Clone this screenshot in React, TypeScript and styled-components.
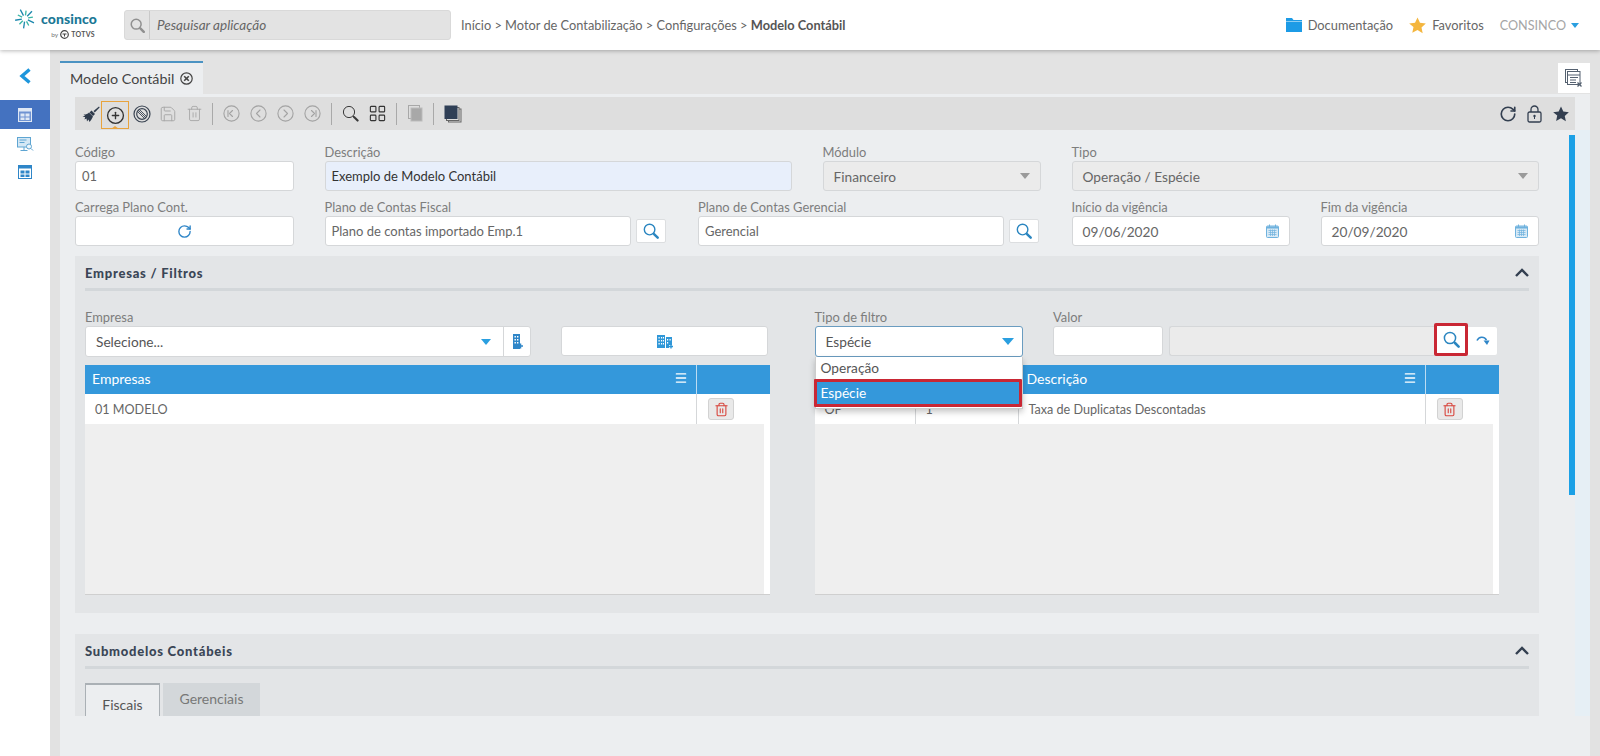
import React from 'react';
import styled, { createGlobalStyle } from 'styled-components';
import { CirclePlus, LayoutGrid, Menu as MenuIcon, Trash2, Save, RotateCw } from 'lucide-react';

const Global = createGlobalStyle`
  html, body { margin: 0; padding: 0; height: 756px; overflow: hidden; background: #fff; }
  * { box-sizing: border-box; }
  body { font-family: Lato, "Liberation Sans", sans-serif; color: #555; }
`;

const Page = styled.div`width: 1600px; height: 756px; display: flex; flex-direction: column; overflow: hidden;`;
const Header = styled.header`
  height: 50px; flex: none; background: #fff; display: flex; align-items: center; padding-left: 15px;
  box-shadow: 0 1px 4px rgba(0,0,0,.28); position: relative; z-index: 5;
`;
const Logo = styled.div`width: 109px; flex: none; display: flex; flex-direction: column; margin-top: -3px;`;
const LogoTop = styled.div`display: flex; align-items: center; gap: 6px;`;
const LogoName = styled.span`font-size: 14px; font-weight: 900; color: #1b7896; letter-spacing: .1px; line-height: 20px; width: 56px;`;
const LogoSub = styled.div`display: flex; align-items: center; justify-content: flex-end; gap: 2px; width: 80px; margin-top: 1px; font-size: 6.5px; color: #777; line-height: 9px;`;
const LogoTotvs = styled.b`font-size: 7px; letter-spacing: .3px; color: #555;`;
const SearchBox = styled.div`
  width: 327px; height: 30px; flex: none; display: flex; align-items: center; background: #e3e3e3;
  border: 1px solid #d9d9d9; border-radius: 3px;
`;
const SearchIconCell = styled.div`width: 25px; height: 28px; display: flex; align-items: center; justify-content: center; border-right: 1px solid #c9c9c9; color: #909090;`;
const SearchText = styled.span`font-style: italic; font-size: 13.5px; color: #666; padding-left: 7px;`;
const Crumbs = styled.div`margin-left: 10px; font-size: 12.8px; color: #666; white-space: nowrap; flex: 1;`;
const CrumbLast = styled.b`color: #555;`;
const HeaderLinks = styled.div`display: flex; align-items: center; padding-right: 21px;`;
const HeaderLink = styled.span`display: flex; align-items: center; gap: 6px; font-size: 12.8px; letter-spacing: .03px; color: #666; margin-right: 16px;`;
const UserName = styled.span`font-size: 12.6px; color: #a5a5a5; margin-right: 5px;`;
const Caret = styled.span<{ $c?: string; $w?: number }>`
  display: inline-block; width: 0; height: 0;
  border-left: ${p => p.$w ?? 4}px solid transparent; border-right: ${p => p.$w ?? 4}px solid transparent;
  border-top: ${p => (p.$w ?? 4) + 1}px solid ${p => p.$c ?? '#2a9fe0'};
`;

const Body = styled.div`flex: 1; display: flex; min-height: 0;`;
const Sidebar = styled.aside`width: 50px; flex: none; background: #fff; display: flex; flex-direction: column; align-items: stretch;`;
const BackCell = styled.div`height: 50px; padding-top: 2px; display: flex; align-items: center; justify-content: center;`;
const SideActive = styled.div`height: 29px; display: flex; align-items: center; justify-content: center; background: #4472c0;`;
const SideList = styled.div`padding-top: 2px; display: flex; flex-direction: column;`;
const SideItem = styled.div`height: 27px; display: flex; align-items: center; justify-content: center;`;
const Gutter = styled.div`width: 10px; flex: none; background: #e2e2e2;`;
const Main = styled.main`flex: none; width: 1530px; display: flex; flex-direction: column; background: #eceef0; min-height: 0;`;
const TabStrip = styled.div`height: 44px; flex: none; background: #e3e3e3; display: flex; align-items: flex-end; justify-content: space-between;`;
const Tab = styled.div`
  width: 143px; height: 33px; background: #eceef0; border-top: 2px solid #4b93c3; display: flex; align-items: center;
  padding-left: 10px; gap: 6px; font-size: 14.3px; color: #444; white-space: nowrap;
`;
const CloseTabs = styled.div`width: 32px; height: 30px; background: #fff; margin-bottom: 1px; display: flex; align-items: center; justify-content: center;`;
const ToolbarWrap = styled.div`padding: 3px 15px 0; flex: none;`;
const Toolbar = styled.div`height: 33px; background: #dedede; display: flex; align-items: center; padding-left: 5px;`;
const ToolBtn = styled.div<{ $w?: number; $off?: boolean }>`
  width: ${p => p.$w ?? 27}px; height: 28px; display: flex; align-items: center; justify-content: center; flex: none;
  color: ${p => (p.$off ? '#a8a8a8' : '#333f50')};
`;
const ToolActive = styled(ToolBtn)`
  border: 1px solid #e8a33d; position: relative; width: 28px; margin-top: 3px; height: 28px; color: #333;
  &::after { content: ''; position: absolute; left: 50%; bottom: -1px; margin-left: -4px; border: 4px solid transparent; border-top: 0; border-bottom: 3px solid #e8a33d; }
`;
const ToolSep = styled.div`width: 1px; height: 22px; background: #a9a9a9; margin: 0 5px; flex: none;`;
const ToolSpacer = styled.div`flex: 1;`;

const Scroller = styled.div`height: 586px; flex: none; display: flex; overflow: hidden; padding-left: 15px;`;
const Form = styled.div`width: 1464px; flex: none; display: flex; flex-direction: column; padding-top: 13px;`;
const Track = styled.div`margin-left: 30px; width: 21px; padding-top: 5px; display: flex; background: linear-gradient(90deg, transparent 6px, #e6eff5 6px);`;
const Thumb = styled.div`width: 6px; height: 360px; background: #1aa0e6;`;

const Row = styled.div<{ $last?: boolean }>`display: flex; margin-bottom: ${p => (p.$last ? 0 : 7)}px;`;
const Field = styled.div<{ $w: number; $ml?: number }>`width: ${p => p.$w}px; margin-left: ${p => p.$ml ?? 0}px; flex: none;`;
const Label = styled.div`height: 18px; line-height: 18px; font-size: 12.9px; color: #7d7d7d; white-space: nowrap;`;
const Input = styled.div<{ $bg?: string; $dark?: boolean; $select?: boolean; $grow?: boolean }>`
  height: 30px; background: ${p => p.$bg ?? '#fff'}; border: 1px solid #d5d7d9; border-radius: 3px;
  padding: 0 ${p => (p.$select ? 10 : 6)}px 0 ${p => (p.$select ? 10 : 6)}px; display: flex; align-items: center; justify-content: space-between;
  font-size: ${p => (p.$select ? 13.7 : 13)}px; color: ${p => (p.$dark ? '#333' : '#666')}; white-space: nowrap;
  ${p => (p.$grow ? 'flex: 1;' : '')}
`;
const CenterInput = styled(Input)`justify-content: center;`;
const InputGroup = styled.div`display: flex; align-items: center; gap: 5px;`;
const LupaBtn = styled.div`width: 30px; height: 24px; flex: none; background: #fff; border: 1px solid #dcdee0; border-radius: 2px; display: flex; align-items: center; justify-content: center;`;

const Panel = styled.section<{ $h: number; $mt: number }>`height: ${p => p.$h}px; margin-top: ${p => p.$mt}px; background: #e3e5e7; padding: 0 10px; flex: none; overflow: hidden;`;
const PanelHead = styled.div`height: 35px; display: flex; align-items: center; justify-content: space-between; border-bottom: 3px solid #d3d7da; padding-top: 1px;`;
const PanelTitle = styled.h3`margin: 0; font-size: 13px; font-weight: 900; letter-spacing: .75px; color: #3a4656;`;
const Columns = styled.div`display: flex; gap: 45px; padding-top: 17px;`;
const Column = styled.div`width: 684.5px; flex: none;`;
const Controls = styled.div`display: flex; height: 57px;`;
const SelectWrap = styled.div<{ $w: number }>`width: ${p => p.$w}px; flex: none; position: relative;`;
const SelectBox = styled.div<{ $focus?: boolean }>`
  height: 31px; background: #fff; border: 1px solid ${p => (p.$focus ? '#6a9cc0' : '#d5d7d9')}; border-radius: 3px; display: flex; align-items: center; padding-left: 10px;
  padding-right: ${p => (p.$focus ? 8 : 0)}px; font-size: 13.7px; color: #555; justify-content: space-between;
`;
const SelectAddon = styled.div`display: flex; align-items: center; height: 100%;`;
const AddonCell = styled.div`width: 27px; height: 100%; border-left: 1px solid #d5d7d9; margin-left: 12px; display: flex; align-items: center; justify-content: center;`;
const WideBtn = styled.div`width: 207px; height: 30px; margin: 18px 0 0 30px; background: #fff; border: 1px solid #d5d7d9; border-radius: 3px; display: flex; align-items: center; justify-content: center;`;
const Dropdown = styled.div`
  position: absolute; top: 49px; left: 0; width: 100%; height: 52px; background: #fff; border: 1px solid #ccc; border-top: 0; z-index: 3;
  box-shadow: 0 3px 6px rgba(0,0,0,.22); font-size: 13.7px; color: #555;
`;
const DropItem = styled.div`height: 22px; line-height: 22px; padding-left: 5px;`;
const DropSel = styled.div`
  height: 28px; line-height: 22px; margin: 0 0 0 -2px; background: #3498db; color: #fff; border: 3px solid #c92734; padding-left: 4px; border-radius: 1px;
`;
const ValorGroup = styled.div`margin-left: 30.5px; display: flex; flex-direction: column;`;
const ValorRow = styled.div`display: flex; align-items: flex-start;`;
const ValueInput = styled.div`width: 110px; height: 30px; background: #fff; border: 1px solid #d5d7d9; border-radius: 3px;`;
const DisabledInput = styled.div`width: 265.5px; height: 30px; margin-left: 5.5px; background: #ebebeb; border: 1px solid #d5d7d9; border-right: 0; border-radius: 3px 0 0 3px;`;
const RedSearch = styled.div`width: 34px; height: 33px; margin-top: -3px; background: #fff; border: 3px solid #c92734; border-radius: 2px; display: flex; align-items: center; justify-content: center;`;
const ArrowBtn = styled.div`width: 30px; height: 30px; background: #fff; border: 1px solid #e2e4e6; border-left: 0; border-radius: 0 3px 3px 0; display: flex; align-items: center; justify-content: center;`;

const Table = styled.div`height: 230px; background: #fff; border-bottom: 1px solid #cfcfcf; display: flex; flex-direction: column; font-size: 12.6px;`;
const TableHead = styled.div<{ $cols: string }>`height: 29px; flex: none; display: grid; grid-template-columns: ${p => p.$cols}; background: #3498db; color: #fff; font-size: 14px;`;
const HeadCell = styled.div<{ $line?: boolean; $pl?: number }>`display: flex; align-items: center; justify-content: space-between; padding: 0 8px 3px ${p => p.$pl ?? 7}px; border-right: ${p => (p.$line ? '1px solid #bcdcf2' : '0')};`;
const TableRow = styled.div<{ $cols: string }>`height: 30px; flex: none; display: grid; grid-template-columns: ${p => p.$cols}; color: #666;`;
const Cell = styled.div<{ $line?: boolean }>`display: flex; align-items: center; padding-left: 10px; white-space: nowrap; border-right: ${p => (p.$line ? '1px solid #d5d7d9' : '0')};`;
const ActionCell = styled.div`display: flex; align-items: center; padding-left: 11px;`;
const DelBtn = styled.div`width: 26px; height: 22px; background: #e9e9e9; border: 1px solid #d2d2d2; border-radius: 3px; display: flex; align-items: center; justify-content: center; color: #d8473f;`;
const EmptyBody = styled.div`flex: 1; margin-right: 6px; background: #efefef;`;

const Tabs = styled.div`display: flex; gap: 3px; padding-top: 14px;`;
const InnerTab = styled.div<{ $on?: boolean }>`
  height: ${p => (p.$on ? 40 : 33)}px; width: ${p => (p.$on ? 75 : 97)}px; display: flex; justify-content: center; font-size: 14px; flex: none;
  padding-top: ${p => (p.$on ? 11 : 7)}px; color: ${p => (p.$on ? '#555' : '#777')};
  background: ${p => (p.$on ? '#eceef0' : '#d3d7da')}; border: ${p => (p.$on ? '1px solid #aab0b5' : '0')}; border-top-width: ${p => (p.$on ? 2 : 0)}px;
`;

const StarShape = ({ size, c }: { size: number; c: string }) => (
  <svg width={size} height={size} viewBox="0 0 20 20" fill={c}><path d="M10 .6l2.900 6.300 6.900.8-5.100 4.700 1.400 6.800L10 15.200l-6.100 3.400 1.400-6.800L.2 7.700l6.900-.8z" /></svg>
);
const Glass = ({ size = 17, c = '#2b86c0', w = 1.5 }: { size?: number; c?: string; w?: number }) => (
  <svg width={size} height={size} viewBox="0 0 17 17" fill="none" stroke={c}>
    <circle cx="7" cy="7" r="5.600" strokeWidth={w} />
    <path d="M11 11l1 1" strokeWidth={w} />
    <path d="M12 12l3.600 3.600" strokeWidth={w + 1.1} strokeLinecap="round" />
  </svg>
);
const CircleNav = ({ d }: { d: string }) => (
  <svg width="17" height="17" viewBox="0 0 17 17" fill="none" stroke="#a3a3a3" strokeWidth="1.100">
    <circle cx="8.500" cy="8.500" r="7.600" /><path d={d} strokeLinecap="round" strokeLinejoin="round" />
  </svg>
);
const Broom = () => (
  <svg width="18" height="18" viewBox="0 0 18 18" fill="#2f3b4c">
    <path d="M17 1.500 L11.500 6 L12.700 7.400 L17.600 2.400z" />
    <path d="M9.500 5.500 L13 9 L11 11 L7.500 7.500z" />
    <path d="M7 7.500 L11 11.500 C10 13.500 9 15.500 7.500 17 L6.500 14.500 L5 16.500 L4.500 13.500 L2.500 14.500 L3.200 12 L.5 12 L3 10.500 L1.500 9.500 C3.500 9.700 5.500 9 7 7.500z" />
  </svg>
);
const BanIcon = () => (
  <svg width="18" height="18" viewBox="0 0 18 18" fill="none" stroke="#3a4452">
    <circle cx="9" cy="9" r="8" strokeWidth="1.200" />
    <circle cx="9" cy="9" r="5.300" strokeWidth="1.200" />
    <path d="M5.200 5.200l7.600 7.600M4.300 6.300l7.500 7.500M6.300 4.300l7.500 7.500" strokeWidth=".9" />
  </svg>
);
const LockIcon = () => (
  <svg width="15" height="18" viewBox="0 0 15 18" fill="none" stroke="#333f50" strokeWidth="1.300">
    <rect x="1" y="7" width="13" height="10" rx="1.500" />
    <path d="M4 7V4.500a3.500 3.500 0 0 1 7 0V7" />
    <circle cx="7.500" cy="11" r="1.200" fill="#333f50" stroke="none" />
    <path d="M7.500 11v3" strokeWidth="1" />
  </svg>
);
const Calendar = () => (
  <svg width="13" height="14" viewBox="0 0 13 14">
    <rect x=".5" y="2" width="12" height="11.500" rx="1" fill="#d7e9f5" stroke="#6fb2de" />
    <rect x="1" y="2.500" width="11" height="2" fill="#6fb2de" />
    <path d="M3.500 .5v3M9.500 .5v3" stroke="#6fb2de" />
    <path d="M2.500 6.500h8M2.500 8.500h8M2.500 10.500h8M4.500 5.500v6.500M6.500 5.500v6.500M8.500 5.500v6.500" stroke="#6fb2de" strokeWidth=".7" />
  </svg>
);
const BuildingPlus = () => (
  <svg width="18" height="15" viewBox="0 0 18 15" fill="#2f97d8">
    <path d="M1 1h8v13H1zM10 3h6v8H13v3H10z" />
    <path d="M2.500 3h1.200v1.500H2.500zM5 3h1.200v1.500H5zM7 3h1v1.500H7zM2.500 6h1.200v1.500H2.500zM5 6h1.200v1.500H5zM7 6h1v1.500H7zM2.500 9h1.200v1.500H2.500zM5 9h1.200v1.500H5zM7 9h1v1.500H7zM11 5h1.200v1.500H11zM13.500 5h1.200v1.500h-1.200zM11 8h1.200v1.500H11z" fill="#fff" />
    <path d="M15 10.500v4M13 12.500h4" stroke="#2f97d8" strokeWidth="1.400" />
  </svg>
);
const TowerPlus = () => (
  <svg width="11" height="17" viewBox="0 0 11 17" fill="#2f86c8">
    <path d="M1 1h7v15H1z" />
    <path d="M2.500 3h1.400v1.500H2.500zM5 3h1.400v1.500H5zM2.500 6h1.400v1.500H2.500zM5 6h1.400v1.500H5zM2.500 9h1.400v1.500H2.500zM5 9h1.400v1.500H5z" fill="#fff" />
    <path d="M8.500 10.500v5M6 13h5" stroke="#2f86c8" strokeWidth="1.500" />
  </svg>
);
const TableIcon = ({ c, fill }: { c: string; fill: string }) => (
  <svg width="14" height="14" viewBox="0 0 14 14">
    <rect x=".5" y=".5" width="13" height="13" fill={fill} stroke={c} />
    <rect x=".5" y=".5" width="13" height="3" fill={c} />
    <path d="M2.500 5.500h4v3h-4zM7.500 5.500h4v3h-4zM2.500 9.500h4v2.500h-4zM7.500 9.500h4v2.500h-4z" fill={c} />
  </svg>
);
const MonitorSearch = () => (
  <svg width="17" height="16" viewBox="0 0 17 16" fill="none" stroke="#5ea5d2">
    <rect x=".5" y=".5" width="13" height="9.500" fill="#d4e8f5" />
    <path d="M2.500 3h7M2.500 5.500h5M7 10v3M3.500 13.500h7" />
    <circle cx="12" cy="9.500" r="2.500" fill="#eef6fb" /><path d="M14 11.500l2 2" />
  </svg>
);
const StackIcon = () => (
  <svg width="18" height="18" viewBox="0 0 18 18">
    <rect x="4.500" y="4" width="12.500" height="13" fill="none" stroke="#666" />
    <rect x="2.500" y="2.500" width="12.500" height="13" fill="#dedede" stroke="#666" />
    <rect x=".5" y=".5" width="13" height="13.500" fill="#2f3f56" />
  </svg>
);
const CopyIcon = () => (
  <svg width="15" height="17" viewBox="0 0 15 17" fill="none" stroke="#a8a8a8">
    <rect x=".5" y=".5" width="11" height="13" /><rect x="3" y="3" width="11" height="13" fill="#a8a8a8" stroke="#bbb" />
  </svg>
);
const ReportX = () => (
  <svg width="18" height="18" viewBox="0 0 18 18" fill="none" stroke="#556170">
    <rect x=".5" y=".5" width="12" height="13" /><rect x="2.500" y="2.500" width="12.500" height="13" fill="#fff" />
    <path d="M2.500 6h12.500M5 8.500h8M5 11h6M5 13.500h6" />
    <path d="M12.500 13.500l4 4M16.500 13.500l-4 4" strokeWidth="1.300" />
  </svg>
);
const Folder = () => (
  <svg width="16" height="14" viewBox="0 0 16 14" fill="#1c9be6"><path d="M0 0h6l1.500 2H16v1.400H0z" /><path d="M0 4h16v10H0z" /></svg>
);
const BurstLogo = () => {
  const rays = Array.from({ length: 10 }, (_, i) => i * 36 + 8);
  return (
    <svg width="20" height="21" viewBox="-10 -10.500 20 21">
      {rays.map((a, i) => (
        <line key={a} x1="0" y1="-3.200" x2="0" y2={i % 2 ? '-10' : '-8'} stroke={i % 2 ? '#1c87ad' : '#39b6a5'} strokeWidth="1.300" transform={`rotate(${a})`} />
      ))}
    </svg>
  );
};
const TotvsMark = () => (
  <svg width="9" height="9" viewBox="0 0 9 9" fill="none" stroke="#444"><circle cx="4.500" cy="4.500" r="3.800" strokeWidth="1.200" /><path d="M2.500 4h4M4.500 4v2.500" /></svg>
);
const CurveArrow = () => (
  <svg width="16" height="14" viewBox="0 0 16 14" fill="none">
    <path d="M2 6.500C4 2.500 9 2 11.500 6" stroke="#2f86c8" strokeWidth="1.600" />
    <path d="M8.500 6.500h6L12 11z" fill="#2f86c8" />
  </svg>
);
const BackChevron = () => (
  <svg width="14" height="16" viewBox="0 0 14 16" fill="none" stroke="#1e96dc" strokeWidth="3.400"><path d="M11.500 1.500L4 8l7.500 6.500" /></svg>
);
const Collapse = () => (
  <svg width="14" height="9" viewBox="0 0 14 9" fill="none" stroke="#333f50" strokeWidth="2.400"><path d="M1 8l6-6 6 6" /></svg>
);
const Trash = () => <Trash2 size={15} strokeWidth={1.8} />;

const leftCols = '612px 1fr';
const rightCols = '101px 103px 407px 1fr';

export default function App() {
  return (
    <Page>
      <Global />
      <Header>
        <Logo>
          <LogoTop><BurstLogo /><LogoName>consinco</LogoName></LogoTop>
          <LogoSub>by <TotvsMark /> <LogoTotvs>TOTVS</LogoTotvs></LogoSub>
        </Logo>
        <SearchBox>
          <SearchIconCell><Glass size={15} c="#909090" w={1.7} /></SearchIconCell>
          <SearchText>Pesquisar aplicação</SearchText>
        </SearchBox>
        <Crumbs>Início &gt; Motor de Contabilização &gt; Configurações &gt; <CrumbLast>Modelo Contábil</CrumbLast></Crumbs>
        <HeaderLinks>
          <HeaderLink><Folder />Documentação</HeaderLink>
          <HeaderLink><StarShape size={17} c="#f4b63f" />Favoritos</HeaderLink>
          <UserName>CONSINCO</UserName>
          <Caret />
        </HeaderLinks>
      </Header>
      <Body>
        <Sidebar>
          <BackCell><BackChevron /></BackCell>
          <SideActive><TableIcon c="#dfe8f5" fill="#6f93d2" /></SideActive>
          <SideList>
            <SideItem><MonitorSearch /></SideItem>
            <SideItem><TableIcon c="#2f86c8" fill="#fff" /></SideItem>
          </SideList>
        </Sidebar>
        <Gutter />
        <Main>
          <TabStrip>
            <Tab>Modelo Contábil
              <svg width="13" height="13" viewBox="0 0 13 13" fill="none" stroke="#444" strokeWidth="1.200"><circle cx="6.500" cy="6.500" r="5.700" /><path d="M4.200 4.200l4.600 4.600M8.800 4.200l-4.600 4.600" strokeWidth="1.600" /></svg>
            </Tab>
            <CloseTabs><ReportX /></CloseTabs>
          </TabStrip>
          <ToolbarWrap>
            <Toolbar>
              <ToolBtn $w={21}><Broom /></ToolBtn>
              <ToolActive><CirclePlus size={19} strokeWidth={1.7} /></ToolActive>
              <ToolBtn $w={26}><BanIcon /></ToolBtn>
              <ToolBtn $off $w={26}><Save size={18} strokeWidth={1.3} /></ToolBtn>
              <ToolBtn $off $w={26}><Trash2 size={17} strokeWidth={1.3} /></ToolBtn>
              <ToolSep />
              <ToolBtn $off><CircleNav d="M9.500 5.500L6.500 8.500l3 3M5 5.500v6" /></ToolBtn>
              <ToolBtn $off><CircleNav d="M10 5L6.500 8.500 10 12" /></ToolBtn>
              <ToolBtn $off><CircleNav d="M7 5l3.500 3.500L7 12" /></ToolBtn>
              <ToolBtn $off><CircleNav d="M7.500 5.500l3 3-3 3M12 5.500v6" /></ToolBtn>
              <ToolSep />
              <ToolBtn><Glass size={17} c="#3a3a3a" w={1} /></ToolBtn>
              <ToolBtn><LayoutGrid size={19} strokeWidth={1.4} color="#333" /></ToolBtn>
              <ToolSep />
              <ToolBtn $w={26}><CopyIcon /></ToolBtn>
              <ToolSep />
              <ToolBtn $w={27}><StackIcon /></ToolBtn>
              <ToolSpacer />
              <ToolBtn $w={28}><RotateCw size={18} strokeWidth={2.2} /></ToolBtn>
              <ToolBtn $w={25}><LockIcon /></ToolBtn>
              <ToolBtn $w={28}><StarShape size={16} c="#333f50" /></ToolBtn>
            </Toolbar>
          </ToolbarWrap>
          <Scroller>
            <Form>
              <Row>
                <Field $w={219}><Label>Código</Label><Input>01</Input></Field>
                <Field $w={467.5} $ml={30.5}><Label>Descrição</Label><Input $bg="#e8effb" $dark>Exemplo de Modelo Contábil</Input></Field>
                <Field $w={218.5} $ml={30.5}><Label>Módulo</Label><Input $bg="#ebebeb" $select>Financeiro<Caret $c="#9a9a9a" $w={5} /></Input></Field>
                <Field $w={467.5} $ml={30.5}><Label>Tipo</Label><Input $bg="#ebebeb" $select>Operação / Espécie<Caret $c="#9a9a9a" $w={5} /></Input></Field>
              </Row>
              <Row $last>
                <Field $w={219}><Label>Carrega Plano Cont.</Label><CenterInput><RotateCw size={15} strokeWidth={2.2} color="#2f86c8" /></CenterInput></Field>
                <Field $w={341.5} $ml={30.5}><Label>Plano de Contas Fiscal</Label>
                  <InputGroup><Input $grow>Plano de contas importado Emp.1</Input><LupaBtn><Glass size={16} /></LupaBtn></InputGroup>
                </Field>
                <Field $w={341} $ml={32}><Label>Plano de Contas Gerencial</Label>
                  <InputGroup><Input $grow>Gerencial</Input><LupaBtn><Glass size={16} /></LupaBtn></InputGroup>
                </Field>
                <Field $w={218.5} $ml={32.5}><Label>Início da vigência</Label><Input $select>09/06/2020<Calendar /></Input></Field>
                <Field $w={218.5} $ml={30.5}><Label>Fim da vigência</Label><Input $select>20/09/2020<Calendar /></Input></Field>
              </Row>
              <Panel $h={357} $mt={10}>
                <PanelHead>
                  <PanelTitle>Empresas / Filtros</PanelTitle>
                  <Collapse />
                </PanelHead>
                <Columns>
                  <Column>
                    <Controls>
                      <SelectWrap $w={446}>
                        <Label>Empresa</Label>
                        <SelectBox>Selecione...
                          <SelectAddon><Caret $w={5} /><AddonCell><TowerPlus /></AddonCell></SelectAddon>
                        </SelectBox>
                      </SelectWrap>
                      <WideBtn><BuildingPlus /></WideBtn>
                    </Controls>
                    <Table>
                      <TableHead $cols={leftCols}>
                        <HeadCell $line>Empresas<MenuIcon size={14} strokeWidth={2.2} /></HeadCell><HeadCell />
                      </TableHead>
                      <TableRow $cols={leftCols}>
                        <Cell $line>01 MODELO</Cell>
                        <ActionCell><DelBtn><Trash /></DelBtn></ActionCell>
                      </TableRow>
                      <EmptyBody />
                    </Table>
                  </Column>
                  <Column>
                    <Controls>
                      <SelectWrap $w={208}>
                        <Label>Tipo de filtro</Label>
                        <SelectBox $focus>Espécie<Caret $w={6} /></SelectBox>
                        <Dropdown>
                          <DropItem>Operação</DropItem>
                          <DropSel>Espécie</DropSel>
                        </Dropdown>
                      </SelectWrap>
                      <ValorGroup>
                        <Label>Valor</Label>
                        <ValorRow>
                          <ValueInput /><DisabledInput />
                          <RedSearch><Glass size={17} /></RedSearch>
                          <ArrowBtn><CurveArrow /></ArrowBtn>
                        </ValorRow>
                      </ValorGroup>
                    </Controls>
                    <Table>
                      <TableHead $cols={rightCols}>
                        <HeadCell /><HeadCell />
                        <HeadCell $line $pl={8}>Descrição<MenuIcon size={14} strokeWidth={2.2} /></HeadCell><HeadCell />
                      </TableHead>
                      <TableRow $cols={rightCols}>
                        <Cell $line>OP</Cell><Cell $line>1</Cell>
                        <Cell $line>Taxa de Duplicatas Descontadas</Cell>
                        <ActionCell><DelBtn><Trash /></DelBtn></ActionCell>
                      </TableRow>
                      <EmptyBody />
                    </Table>
                  </Column>
                </Columns>
              </Panel>
              <Panel $h={82} $mt={21}>
                <PanelHead>
                  <PanelTitle>Submodelos Contábeis</PanelTitle>
                  <Collapse />
                </PanelHead>
                <Tabs>
                  <InnerTab $on>Fiscais</InnerTab>
                  <InnerTab>Gerenciais</InnerTab>
                </Tabs>
              </Panel>
            </Form>
            <Track><Thumb /></Track>
          </Scroller>
        </Main>
        <Gutter />
      </Body>
    </Page>
  );
}
